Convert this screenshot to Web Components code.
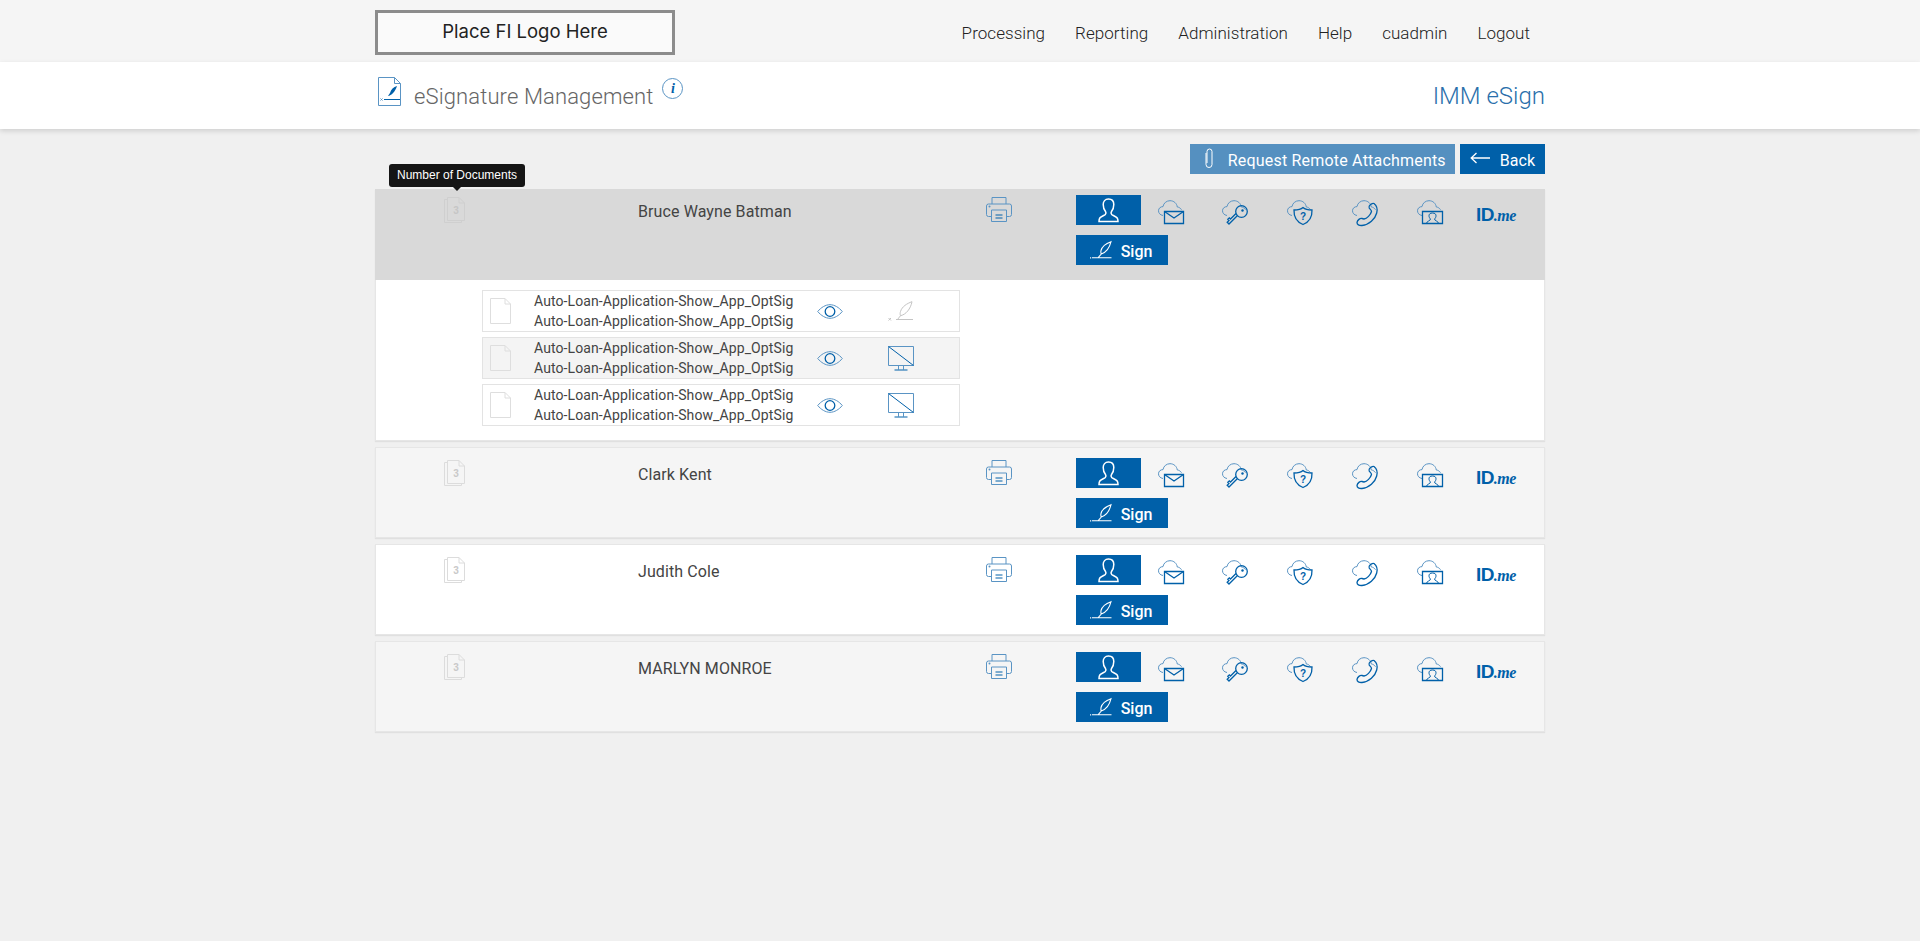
<!doctype html>
<html lang="en">
<head>
<meta charset="utf-8">
<title>eSignature Management</title>
<style>
  html, body { margin: 0; background: #f0f0f0; font-family: Roboto, "Liberation Sans", sans-serif; }
</style>
</head>
<body>
<imm-header></imm-header>
<imm-subheader></imm-subheader>
<imm-main>
  <div slot="actions">
    <imm-action icon="clip" tone="light">Request Remote Attachments</imm-action>
    <imm-action icon="back">Back</imm-action>
  </div>
  <imm-signer name="Bruce Wayne Batman" active tooltip="Number of Documents">
    <imm-document action="quill"></imm-document>
    <imm-document action="monitor" shaded></imm-document>
    <imm-document action="monitor"></imm-document>
  </imm-signer>
  <imm-signer name="Clark Kent" shaded></imm-signer>
  <imm-signer name="Judith Cole"></imm-signer>
  <imm-signer name="MARLYN MONROE" shaded></imm-signer>
</imm-main>

<script>
// cloud outline shared by the authentication icons
const CLOUD = '<path class="l" d="M5 15.500C2 15 .5 13 .5 10.800.5 8.200 2.600 6.600 5 6.600 5.600 3 8.600.7 12 .7c3.800 0 6.800 2.600 7.300 6.300 1.800.2 3.300 1.200 4.200 2.700"/>';

const ICONS = {
  doc: [21, 26, `<path class="g" d="M3.500 2.500H.5v23h17v-2"/><path class="g" d="M3.500.5h11.500l5.500 5.500v17.500h-17zM15 .5V6h5.500"/><text x="12" y="16.500" text-anchor="middle" class="n">3</text>`],
  file: [21, 26, `<path class="g" d="M.5.500h14.500l5.500 5.500v19.500H.5zM15 .5V6h5.500"/>`],
  print: [26, 25, `<path class="l" d="M6 7V.5h14V7M5.500 19.500H2.500a2 2 0 0 1-2-2V9a2 2 0 0 1 2-2h21a2 2 0 0 1 2 2v8.500a2 2 0 0 1-2 2h-3"/><path class="l" d="M5.500 13h15v11.500h-15z"/><path class="m" d="M9.500 18h7M9.500 21h7"/><circle cx="3.500" cy="9.500" r="1" fill="#5a94c4"/>`],
  person: [21, 24, `<path d="M10.500 1C7 1 5.200 3.500 5.200 6.500c0 3 1 5.400 2.300 7 .5.700.5 2.200-.2 3-1.200 1.300-4.500 2-5.500 3.500-.6.900-.8 2-.8 3.500h19c0-1.500-.2-2.600-.8-3.500-1-1.500-4.300-2.200-5.500-3.500-.7-.8-.7-2.300-.2-3 1.300-1.600 2.300-4 2.300-7C15.800 3.500 14 1 10.500 1z" fill="none" stroke="#fff" stroke-width="1.500"/>`],
  mail: [26, 24, CLOUD + `<path class="d" d="M6.500 11.500h19v12h-19z"/><path class="d" d="M6.500 11.500L16 18l9.500-6.500"/>`],
  key: [26, 25, CLOUD + `<circle class="d" cx="19.500" cy="11.500" r="5.800"/><circle cx="20.500" cy="10.500" r="1.200" fill="#0060a9"/><path class="d" d="M15.500 15.500L7 24l-1.800-1.800 1.800-1.700-1.200-1.300 1.500-1.400 1.200 1.200 5.500-5.500"/>`],
  shield: [26, 25, CLOUD + `<path class="d" d="M16 7.500c2 1.800 4.500 2.500 9 2.500.3 7-2.500 11.800-9 14.500C9.500 21.800 6.700 17 7 10c4.500 0 7-.7 9-2.500z"/><text x="16" y="20" text-anchor="middle" class="q">?</text>`],
  phone: [26, 26, CLOUD + `<path class="d" d="M18 5C19.500 3.500 21 3 22 3.500c2.500 2 3.700 6 2.700 9.500-1.500 6-7.700 12-14.700 12.500-3 .2-5-1-5-3 .5-2.500 3-4.500 5-4l2 .5c3-.5 6.500-4 7.500-7.500 0-1.500-1.800-2.500-2.300-3.500-.2-1 0-2.500.8-3z"/>`],
  video: [26, 24, CLOUD + `<path class="d" d="M5.500 11.500h20v12h-20z"/><path class="m" d="M9.500 23.500c0-2.500 4-2.500 4-4.500-1-1-1.500-2-1.500-3.200 0-1.600 1-2.800 3.500-2.800s3.500 1.200 3.500 2.800c0 1.200-.5 2.200-1.500 3.200 0 2 4 2 4 4.500"/>`],
  feather: [22, 18, `<path d="M21 .7C16 2.500 12 5.500 11 9.500c-.3 1.500-.2 2.500.3 3.500C16 11.500 19.500 7 21 .7zM11.300 13L8 16.800M2 16.800h19.500M.6 16.200v1.200" fill="none" stroke="currentColor" stroke-width="1.100"/>`],
  quill: [25, 20, `<path d="M24 .7C19 2.500 14 5.500 12.500 10.500c-.5 1.500-.5 3 0 4.200C18 13.500 22.500 8 24 .7zM12.500 14.700L9.500 18.500M8 18.500h17M.5 17l2.500 2.500M3 17L.5 19.500" fill="none" stroke="currentColor" stroke-width="1"/>`],
  monitor: [26, 25, `<path class="l" d="M.5.500h25v19H.5z"/><path class="m" d="M.5.500l25 19" stroke-width="1.400"/><path class="l" d="M10.500 19.500v4M15.500 19.500v4"/><path class="m" d="M6.500 24h13"/>`],
  eye: [26, 15, `<path class="l" d="M.7 7.500C4 3.500 8.500.7 13 .7s9 2.800 12.300 6.800C22 11.500 17.500 14.300 13 14.300S4 11.500.7 7.500z"/><circle class="d" cx="13" cy="7.500" r="4.800"/>`],
  clip: [8, 21, `<path d="M1 5v11.500a3 3 0 0 0 6 0V3.500a2.500 2.500 0 0 0-5 0V15" fill="none" stroke="#fff" stroke-width="1"/>`],
  back: [20, 12, `<path d="M20 6H1.500M6.500 1L1.200 6l5.300 5" fill="none" stroke="#fff" stroke-width="1.300"/>`],
  sheet: [23, 29, `<path class="l" d="M.5.500h16l6 6v22H.5z"/><path class="l" d="M16.500.5v6h6"/><path d="M19 9c-3.500 1-6 3.500-7 7l-2 3c3.500-.5 7-4 9-10z" fill="#0060a9"/><path class="m" d="M6 22.500h16" stroke-width="1.600"/><path class="l" d="M2.500 21.500l2 2M4.500 21.500l-2 2"/>`]
};

class ImmIcon extends HTMLElement {
  connectedCallback() {
    const [w, h, body] = ICONS[this.getAttribute("name")];
    this.attachShadow({ mode: "open" }).innerHTML = `
      <style>
        :host { display: block; width: ${w}px; height: ${h}px; line-height: 0; }
        svg { display: block; overflow: visible; }
        .l { fill: none; stroke: #5a94c4; stroke-width: 1; }
        .m { fill: none; stroke: #0060a9; stroke-width: 1; }
        .d { fill: none; stroke: #0060a9; stroke-width: 1.300; }
        .g { fill: none; stroke: var(--doc-line, #dcdcdc); stroke-width: 1; }
        .n { font: bold 10px "Liberation Sans", sans-serif; fill: var(--doc-num, #c9c9c9); }
        .q { font: bold 10px "Liberation Sans", sans-serif; fill: #0060a9; }
      </style>
      <svg width="${w}" height="${h}" viewBox="0 0 ${w} ${h}">${body}</svg>`;
  }
}

class ImmHeader extends HTMLElement {
  connectedCallback() {
    const items = ["Processing", "Reporting", "Administration", "Help", "cuadmin", "Logout"];
    this.attachShadow({ mode: "open" }).innerHTML = `
      <style>
        :host { display: block; background: #f5f5f5; height: 62px; }
        .wrap { width: 1170px; margin: 0 auto; height: 100%; display: flex; justify-content: space-between; box-sizing: border-box; padding-top: 10px; }
        .logo { width: 300px; height: 45px; box-sizing: border-box; border: 3px solid #8c8c8c; background: #fafafa; display: flex; align-items: center; justify-content: center; font: 400 18.500px Inter, sans-serif; color: #222; padding-bottom: 3px; }
        nav { display: flex; gap: 30px; padding: 12px 15px 0 0; font: 300 17px/23px Roboto, sans-serif; letter-spacing: .05px; color: #222; }
      </style>
      <div class="wrap">
        <div class="logo">Place FI Logo Here</div>
        <nav>${items.map(i => `<span>${i}</span>`).join("")}</nav>
      </div>`;
  }
}

class ImmSubheader extends HTMLElement {
  connectedCallback() {
    this.attachShadow({ mode: "open" }).innerHTML = `
      <style>
        :host { display: block; background: #fff; height: 67px; box-shadow: 0 2px 5px rgba(0,0,0,.14); position: relative; }
        .wrap { width: 1170px; margin: 0 auto; display: flex; align-items: flex-start; box-sizing: border-box; padding: 15px 0 0 3px; }
        h1 { margin: 0 0 0 13px; padding-top: 6px; font: 300 22px/28px Roboto, sans-serif; letter-spacing: .12px; color: #666; }
        .info { margin: 1px 0 0 9px; width: 19px; height: 19px; border: 1px solid #5a94c4; border-radius: 50%; display: flex; align-items: center; justify-content: center; font: italic bold 14px "Liberation Serif", serif; color: #0060a9; }
        .app { margin-left: auto; padding-top: 5px; font: 300 24px/28px Roboto, sans-serif; color: #2a6fab; }
      </style>
      <div class="wrap">
        <imm-icon name="sheet"></imm-icon>
        <h1>eSignature Management</h1>
        <span class="info">i</span>
        <span class="app">IMM eSign</span>
      </div>`;
  }
}

class ImmMain extends HTMLElement {
  connectedCallback() {
    this.attachShadow({ mode: "open" }).innerHTML = `
      <style>
        :host { display: block; width: 1170px; margin: 0 auto; padding-top: 15px; }
        ::slotted([slot=actions]) { display: flex; justify-content: flex-end; gap: 5px; height: 45px; }
        .rows { display: flex; flex-direction: column; }
        ::slotted(imm-signer) { margin-bottom: 6px; }
      </style>
      <slot name="actions"></slot>
      <div class="rows"><slot></slot></div>`;
  }
}

class ImmAction extends HTMLElement {
  connectedCallback() {
    const light = this.getAttribute("tone") === "light";
    this.attachShadow({ mode: "open" }).innerHTML = `
      <style>
        :host { display: flex; align-items: center; height: 30px; box-sizing: border-box; background: ${light ? "#5590c0" : "#0060a9"}; color: #fff; font: 400 16px Roboto, sans-serif; letter-spacing: ${light ? ".2px" : "0"}; padding: 2px ${light ? "9px 0 15px" : "10px 0 10px"}; gap: ${light ? "15px" : "10px"}; }
        imm-icon { margin-top: -4px; }
      </style>
      <imm-icon name="${this.getAttribute("icon")}"></imm-icon><slot></slot>`;
  }
}

class ImmSigner extends HTMLElement {
  connectedCallback() {
    const active = this.hasAttribute("active");
    const bg = active ? "#d9d9d9" : this.hasAttribute("shaded") ? "#f5f5f5" : "#fff";
    const methods = ["mail", "key", "shield", "phone", "video"];
    const tip = this.getAttribute("tooltip");
    this.attachShadow({ mode: "open" }).innerHTML = `
      <style>
        :host { display: block; box-sizing: border-box; background: #fff; box-shadow: 0 0 0 1px #e6e6e6 inset, 0 1px 1px #e0e0e0; --doc-line: ${active ? "#cfcfcf" : "#dcdcdc"}; --doc-num: ${active ? "#c6c6c6" : "#c9c9c9"}; }
        .head { display: grid; grid-template-columns: 262px 347px 91px 1fr; height: 91px; box-sizing: border-box; background: ${bg}; border: 1px solid ${active ? "#d9d9d9" : "#e6e6e6"}; border-bottom-width: ${active ? 0 : 1}px; padding-top: ${active ? 5 : 10}px; }
        .count { position: relative; padding: 2px 0 0 68px; }
        .tip { position: absolute; left: 13px; top: -31px; height: 23px; padding: 0 8px; border-radius: 3px; background: #151515; color: #fff; font: 12px/23px "Liberation Sans", sans-serif; white-space: nowrap; }
        .tip::after { content: ""; position: absolute; left: 64px; top: 23px; border: 4px solid transparent; border-top-color: #151515; border-bottom: 0; }
        .name { font: 400 16px/34px Roboto, sans-serif; letter-spacing: .1px; color: #444; }
        .print { padding: 2px 0 0 1px; }
        .auth { display: grid; grid-template-columns: repeat(7, 65px); grid-template-rows: 30px 30px; row-gap: 10px; }
        .btn { background: #0060a9; color: #fff; display: flex; align-items: center; justify-content: center; height: 30px; }
        .sign { grid-row: 2; grid-column: 1 / span 2; width: 92px; gap: 9px; font: 500 16px Roboto, sans-serif; box-sizing: border-box; padding-right: 2px; }
        .sign span { padding-top: 2px; }
        .m { padding: 5px 0 0 17px; }
        .m + .m { padding-left: 16px; }
        .idme { padding: 10px 0 0 10px; font: bold 19px/19px "Liberation Sans", sans-serif; color: #0060a9; letter-spacing: -.6px; white-space: nowrap; }
        .idme i { font: italic bold 16px "Liberation Serif", serif; letter-spacing: -.5px; }
        .docs { display: ${active ? "flex" : "none"}; flex-direction: column; gap: 5px; padding: 10px 0 15px 107px; }
      </style>
      <div class="head">
        <div class="count">
          ${tip ? `<span class="tip">${tip}</span>` : ""}
          <imm-icon name="doc"></imm-icon>
        </div>
        <div class="name">${this.getAttribute("name")}</div>
        <div class="print"><imm-icon name="print"></imm-icon></div>
        <div class="auth">
          <div class="btn"><imm-icon name="person"></imm-icon></div>
          ${methods.map(m => `<div class="m"><imm-icon name="${m}"></imm-icon></div>`).join("")}
          <div class="idme">ID<i>.me</i></div>
          <div class="btn sign"><imm-icon name="feather"></imm-icon><span>Sign</span></div>
        </div>
      </div>
      <div class="docs"><slot></slot></div>`;
  }
}

class ImmDocument extends HTMLElement {
  connectedCallback() {
    const act = this.getAttribute("action");
    const file = "Auto-Loan-Application-Show_App_OptSig";
    this.attachShadow({ mode: "open" }).innerHTML = `
      <style>
        :host { display: grid; grid-template-columns: 51px 283px 71px 1fr; align-items: center; box-sizing: border-box; width: 478px; height: 42px; border: 1px solid #e3e3e3; background: ${this.hasAttribute("shaded") ? "#f4f4f4" : "#fff"}; color: #444; --doc-line: #dedede; }
        .f { padding-left: 7px; }
        .t { font: 400 14px/20px Roboto, sans-serif; letter-spacing: .1px; white-space: nowrap; }
        .a { color: #c4c4c4; }
      </style>
      <div class="f"><imm-icon name="file"></imm-icon></div>
      <div class="t">${file}<br>${file}</div>
      <div><imm-icon name="eye"></imm-icon></div>
      <div class="a"><imm-icon name="${act}"></imm-icon></div>`;
  }
}

customElements.define("imm-icon", ImmIcon);
customElements.define("imm-header", ImmHeader);
customElements.define("imm-subheader", ImmSubheader);
customElements.define("imm-main", ImmMain);
customElements.define("imm-action", ImmAction);
customElements.define("imm-signer", ImmSigner);
customElements.define("imm-document", ImmDocument);
</script>
</body>
</html>
